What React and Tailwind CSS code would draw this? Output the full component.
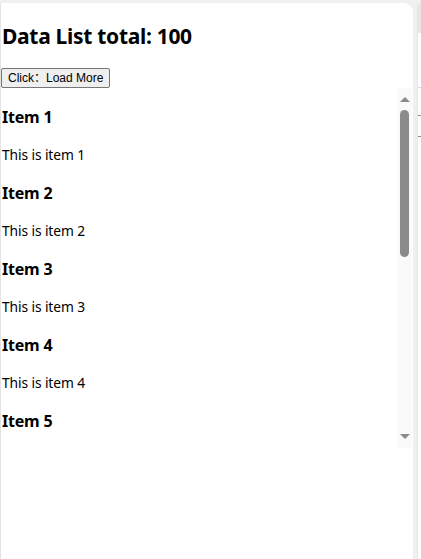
import React from 'react';

const items = Array.from({ length: 100 }, (_, i) => ({ id: i + 1, title: `Item ${i + 1}`, body: `This is item ${i + 1}` }));

const FakeScrollbar = () => (
  <div className="w-[15px] shrink-0 bg-[#fafafa] flex flex-col items-center">
    <div className="h-[22px] w-full flex items-center justify-center">
      <div className="w-0 h-0 border-l-[5px] border-r-[5px] border-b-[5px] border-l-transparent border-r-transparent border-b-[#8a8a8a]" />
    </div>
    <div className="w-[9px] h-[147px] rounded-full bg-[#8b8b8b]" />
    <div className="flex-1" />
    <div className="h-[24px] w-full flex items-center justify-center">
      <div className="w-0 h-0 border-l-[5px] border-r-[5px] border-t-[5px] border-l-transparent border-r-transparent border-t-[#8a8a8a]" />
    </div>
  </div>
);

export default function App() {
  return (
    <div className="h-[559px] w-full overflow-hidden bg-[#f0f0f0] pt-[3px] flex gap-[4px] text-black" style={{ fontFamily: '"Noto Sans", "Open Sans", sans-serif' }}>
      <div className="w-[413px] shrink-0 bg-white rounded-tr-[9px] border-l border-[#e3e3e3] flex flex-col">
        <h2 className="text-[21px] tracking-[-0.3px] font-bold leading-[29px] mt-[19px] mb-[17px] pl-px">Data List total: 100</h2>
        <div className="flex">
          <button
            className="h-[20px] px-[6px] whitespace-nowrap bg-[#efefef] border border-[#767676] rounded-[2px] text-[12px] leading-none"
            style={{ fontFamily: '"Liberation Sans", Arial, "Noto Sans CJK SC", sans-serif' }}
          >
            Click：Load More
          </button>
        </div>
        <div className="h-[360px] flex pr-px">
          <div className="flex-1 overflow-hidden pl-px">
            {items.map((item) => (
              <div key={item.id}>
                <h3 className="text-[16px] tracking-[-0.2px] font-bold leading-[22px] pt-px my-[17px]">{item.title}</h3>
                <p className="text-[13.8px] tracking-[-0.1px] leading-[19px] my-[14.4px]">{item.body}</p>
              </div>
            ))}
          </div>
          <FakeScrollbar />
        </div>
      </div>
      <div className="flex-1 bg-white rounded-tl-[9px] border-l border-[#e3e3e3] flex flex-col overflow-hidden">
        <div className="h-[30px] bg-[#e6e6e6]" />
        <div className="h-[54px]" />
        <div className="h-px bg-[#cfe0f5]" />
        <div className="h-[27px]" />
        <div className="h-px bg-[#8a8a8a]" />
        <div className="h-[20px]" />
        <div className="h-px bg-[#8a8a8a]" />
      </div>
    </div>
  );
}
